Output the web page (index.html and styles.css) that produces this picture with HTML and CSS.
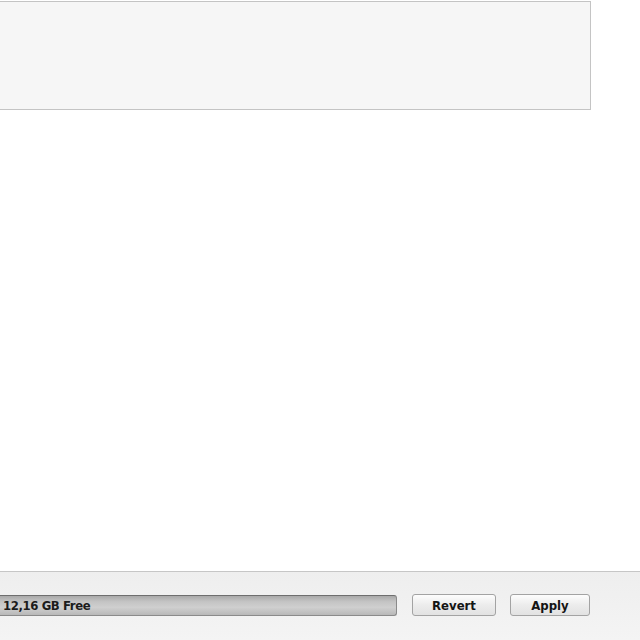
FILE: index.html
```html
<!DOCTYPE html>
<html>
<head>
<meta charset="utf-8">
<link rel="stylesheet" href="styles.css">
</head>
<body>
<div class="page">
  <div class="top-box"></div>
  <div class="spacer"></div>
  <div class="footer">
    <div class="capacity"><span class="cap-text">12,16 GB Free</span></div>
    <button class="btn btn-revert">Revert</button>
    <button class="btn btn-apply">Apply</button>
  </div>
</div>
</body>
</html>
```
FILE: styles.css
```css
html, body {
  margin: 0;
  padding: 0;
  background: #ffffff;
  width: 640px;
  height: 640px;
  overflow: hidden;
  font-family: "DejaVu Sans Condensed", "DejaVu Sans", "Liberation Sans", sans-serif;
}
.page {
  display: flex;
  flex-direction: column;
  height: 640px;
}
.top-box {
  margin-top: 1px;
  margin-left: -2px;
  width: 591px;
  height: 107px;
  border: 1px solid #c4c4c4;
  background: #f6f6f6;
  box-sizing: content-box;
}
.spacer {
  flex: 1;
}
.footer {
  height: 69px;
  border-top: 1px solid #c6c6c6;
  background: linear-gradient(#eeeeee, #f4f4f4);
  display: flex;
  align-items: flex-start;
  padding-top: 22px;
  box-sizing: border-box;
}
.capacity {
  margin-left: -4px;
  margin-top: 1px;
  width: 401px;
  height: 21px;
  box-sizing: border-box;
  border: 1px solid #8a8a8a;
  border-top-color: #6e6e6e;
  border-radius: 3px;
  background: linear-gradient(#a9a9a9 0%, #c4c4c4 30%, #cfcfcf 60%, #b8b8b8 100%);
  display: flex;
  align-items: center;
}
.cap-text {
  margin-left: 6px;
  font-size: 13px;
  font-weight: bold;
  color: #1c1c1c;
  letter-spacing: -0.4px;
}
.btn {
  height: 22px;
  box-sizing: border-box;
  border: 1px solid #a3a3a3;
  border-radius: 3px;
  background: linear-gradient(#fdfdfd, #ececec 50%, #e2e2e2);
  font-family: "DejaVu Sans Condensed", "DejaVu Sans", "Liberation Sans", sans-serif;
  font-size: 13px;
  font-weight: bold;
  color: #141414;
  padding: 0;
}
.btn-revert {
  margin-left: 15px;
  width: 84px;
}
.btn-apply {
  margin-left: 14px;
  width: 80px;
}
```
